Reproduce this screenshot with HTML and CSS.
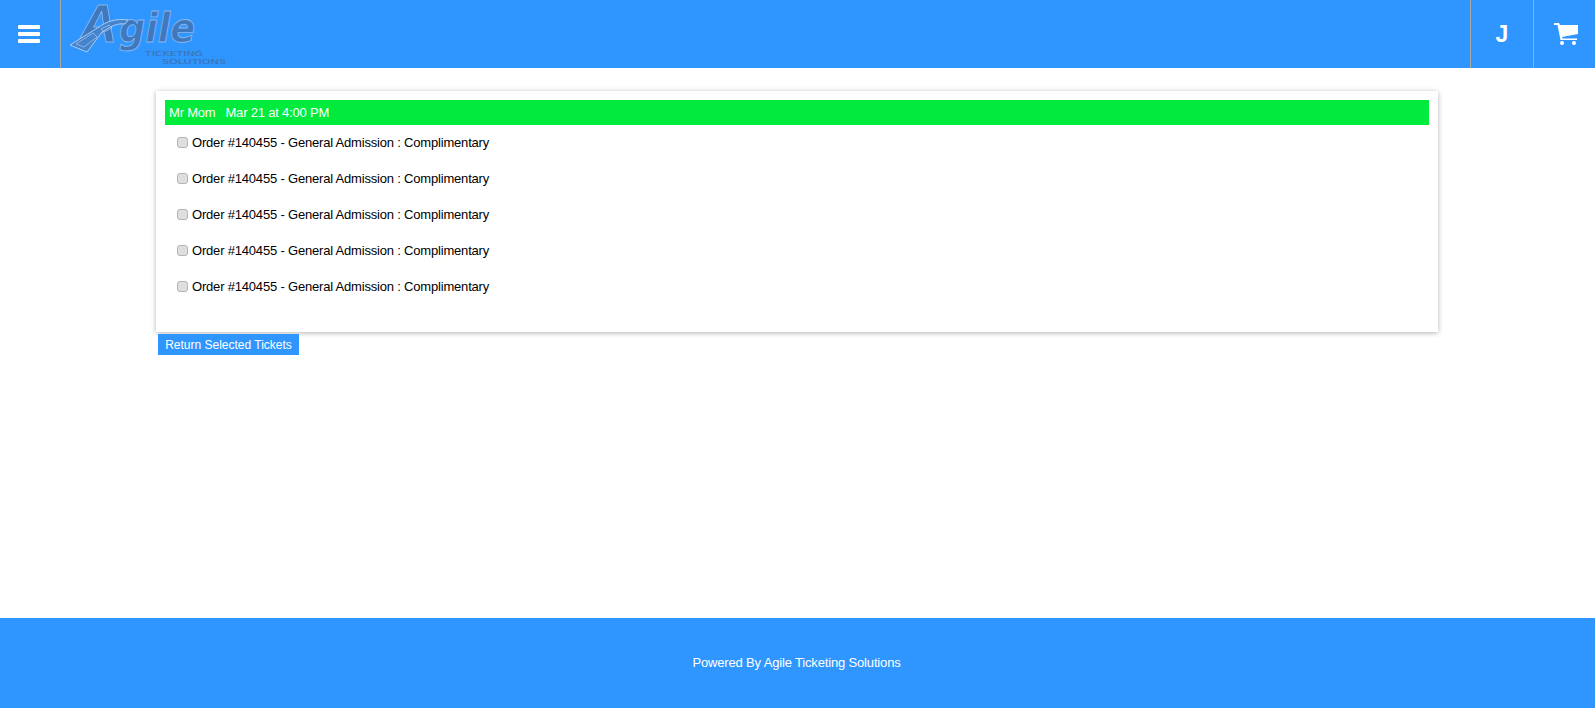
FILE: index.html
```html
<!DOCTYPE html>
<html lang="en">
<head>
    <meta charset="UTF-8">
    <title>Agile Ticketing Solutions</title>
    <link rel="stylesheet" href="styles.css">
</head>
<body>
    <header class="topbar">
        <div class="nav-cell menu-cell">
            <svg class="menu-icon" viewBox="0 0 22 18" width="22" height="18">
                <rect x="0" y="0" width="22" height="4" rx="1"/>
                <rect x="0" y="7" width="22" height="4" rx="1"/>
                <rect x="0" y="14" width="22" height="4" rx="1"/>
            </svg>
        </div>
        <div class="logo">
            <svg viewBox="0 0 172 68" width="172" height="68">
                <text class="logo-a" x="17" y="42">A</text>
                <text class="logo-word" x="57" y="42" textLength="76" lengthAdjust="spacingAndGlyphs">gile</text>
                <path class="logo-ticket" d="M8 45 L37 27 C44 22 54 18 66 20 L63 24 C56 23 50 26 45 29 L40 32 L25 52 Z"/>
                <path class="logo-ticket-line" d="M14 44 L31 33 L35 37 L22 47 Z"/>
                <path class="logo-ticket-line" d="M39 29 L47 25 L50 28 L42 32 Z"/>
                <text class="logo-sub" x="83" y="56" textLength="58" lengthAdjust="spacingAndGlyphs">TICKETING</text>
                <text class="logo-sub" x="100" y="64" textLength="64" lengthAdjust="spacingAndGlyphs">SOLUTIONS</text>
            </svg>
        </div>
        <div class="nav-right">
            <div class="nav-cell user-cell">J</div>
            <div class="nav-cell cart-cell">
                <svg class="cart-icon" viewBox="0 0 24 22" width="24" height="22">
                    <path d="M0 0 H5 L6 2 H24 V11 L8 14 L8.500 15.500 H23 V17 H6.500 L3.500 2 H0 Z"/>
                    <circle cx="8" cy="20" r="2"/>
                    <circle cx="20" cy="20" r="2"/>
                </svg>
            </div>
        </div>
    </header>

    <main class="content">
        <section class="card">
            <h2 class="show-title"><span>Mr Mom</span><span>Mar 21 at 4:00 PM</span></h2>
            <label class="ticket"><input type="checkbox"> Order #140455 - General Admission : Complimentary</label>
            <label class="ticket"><input type="checkbox"> Order #140455 - General Admission : Complimentary</label>
            <label class="ticket"><input type="checkbox"> Order #140455 - General Admission : Complimentary</label>
            <label class="ticket"><input type="checkbox"> Order #140455 - General Admission : Complimentary</label>
            <label class="ticket"><input type="checkbox"> Order #140455 - General Admission : Complimentary</label>
        </section>
        <button class="return-btn">Return Selected Tickets</button>
    </main>

    <footer class="footer">Powered By Agile Ticketing Solutions</footer>
</body>
</html>
```

FILE: styles.css
```css
body {
    margin: 0;
    height: 708px;
    display: flex;
    flex-direction: column;
    font-family: "Liberation Sans", Arial, sans-serif;
    font-size: 13px;
    color: #000;
    background: #fff;
    overflow: hidden;
}

/* Header */
.topbar {
    height: 68px;
    display: flex;
    background: #3096ff;
    flex-shrink: 0;
}

.nav-cell {
    display: flex;
    align-items: center;
    justify-content: center;
    height: 68px;
    box-sizing: border-box;
    color: #fff;
}

.menu-cell {
    width: 61px;
    border-right: 1px solid #a9a9a0;
}

.menu-icon {
    fill: #fff;
    margin-left: -3px;
}

.logo {
    width: 172px;
    margin-left: 1px;
}

.logo svg {
    display: block;
}

.logo-ticket {
    fill: #4583cc;
    stroke: #a9cdf5;
    stroke-width: 1;
}

.logo-ticket-line {
    fill: none;
    stroke: #a9cdf5;
    stroke-width: 0.7;
}

.logo-a,
.logo-word {
    font-weight: bold;
    font-style: italic;
    fill: #3f78bd;
    stroke: #86b6ec;
    stroke-width: 0.9;
}

.logo-a {
    font-family: "Liberation Sans", Arial, sans-serif;
    font-size: 53px;
}

.logo-word {
    font-family: "DejaVu Sans", sans-serif;
    font-size: 40px;
}

.logo-sub {
    font-family: "DejaVu Sans", sans-serif;
    font-size: 7px;
    fill: #3f6fa8;
}

.nav-right {
    display: flex;
    margin-left: auto;
}

.user-cell {
    width: 63px;
    border-left: 1px solid #a9a9a0;
    font-size: 23px;
    font-weight: bold;
}

.cart-cell {
    width: 62px;
    border-left: 1px solid #a9a9a0;
}

.cart-icon {
    fill: #fff;
    margin-left: 2px;
}

/* Content */
.content {
    flex: 1;
    padding: 23px 157px 0 156px;
}

.card {
    height: 241px;
    box-sizing: border-box;
    padding: 9px 9px 0;
    background: #fff;
    box-shadow: 0 1px 5px rgba(0, 0, 0, 0.3);
}

.show-title {
    display: flex;
    gap: 10px;
    margin: 0 0 7px;
    height: 25px;
    padding-left: 4px;
    background: #00eb3c;
    color: #fff;
    font-size: 13px;
    font-weight: normal;
    letter-spacing: -0.2px;
    line-height: 25px;
}

.ticket {
    display: flex;
    align-items: center;
    gap: 4px;
    height: 20px;
    margin: 0 0 16px 12px;
    letter-spacing: -0.19px;
}

.ticket input {
    appearance: none;
    width: 11px;
    height: 11px;
    margin: 0;
    flex-shrink: 0;
    background: #dedede;
    border: 1px solid #b4b4b4;
    border-radius: 3px;
    box-sizing: border-box;
}

.return-btn {
    display: block;
    margin: 2px 0 0 2px;
    width: 141px;
    height: 21px;
    padding: 0;
    border: none;
    background: #3096ff;
    color: #fff;
    font-family: inherit;
    font-size: 12px;
}

/* Footer */
.footer {
    height: 90px;
    flex-shrink: 0;
    box-sizing: border-box;
    padding: 37px 2px 0 0;
    background: #3096ff;
    color: #fff;
    font-size: 13px;
    letter-spacing: -0.16px;
    line-height: 16px;
    text-align: center;
}
```
